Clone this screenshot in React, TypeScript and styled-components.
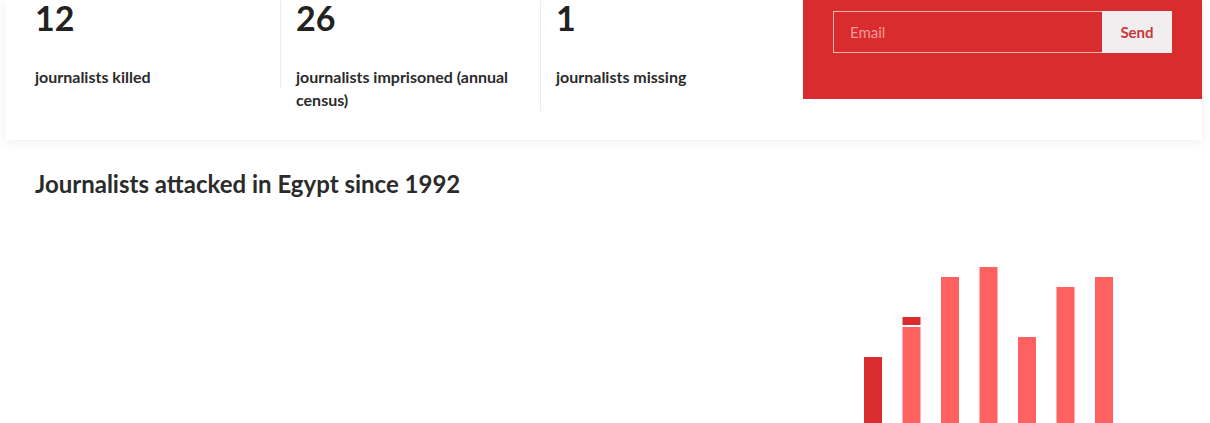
import React from 'react';
import {styled, createGlobalStyle} from 'styled-components';

const GlobalStyle = createGlobalStyle`
  html, body {
    margin: 0;
    padding: 0;
    background: #ffffff;
    overflow: hidden;
  }

  body {
    font-family: Lato, 'Open Sans', sans-serif;
    color: #2b2b2b;
  }

  * {
    box-sizing: border-box;
  }
`

type StatType = {
    value: number
    label: string
}

const stats: StatType[] = [
    {value: 12, label: 'journalists killed'},
    {value: 26, label: 'journalists imprisoned (annual census)'},
    {value: 1, label: 'journalists missing'},
]

type BarType = {
    killed: number
    other: number
}

// counts per year, the last ones only; earlier years are empty
const bars: BarType[] = [
    {killed: 8, other: 0},
    {killed: 1, other: 11},
    {killed: 0, other: 16},
    {killed: 0, other: 17},
    {killed: 0, other: 10},
    {killed: 0, other: 15},
    {killed: 0, other: 16},
]

const CHART_WIDTH = 1140
const CHART_HEIGHT = 210
const BASELINE = 206
const UNIT = 10
const BAR_WIDTH = 18
const FIRST_BAR_X = 829
const BAR_STEP = 38.5

const Chart = () => {
    return (
        <ChartSvg width={CHART_WIDTH} height={CHART_HEIGHT} viewBox={`0 0 ${CHART_WIDTH} ${CHART_HEIGHT}`}>
            {bars.map((bar, i) => {
                const x = FIRST_BAR_X + i * BAR_STEP
                const otherTop = BASELINE - bar.other * UNIT
                const killedTop = otherTop - bar.killed * UNIT
                return (
                    <g key={i}>
                        {bar.other > 0 &&
                            <rect x={x} y={otherTop} width={BAR_WIDTH} height={bar.other * UNIT} fill="#ff6161"/>}
                        {bar.killed > 0 &&
                            <rect x={x} y={killedTop} width={BAR_WIDTH}
                                  height={bar.killed * UNIT - (bar.other > 0 ? 2 : 0)} fill="#d92c2e"/>}
                    </g>
                )
            })}
        </ChartSvg>
    )
}

export default function App() {
    return (
        <Page>
            <GlobalStyle/>
            <StatsCard>
                <StatsRow>
                    {stats.map((stat, i) => (
                        <Stat key={stat.label} divider={i < stats.length - 1}>
                            <StatValue>{stat.value}</StatValue>
                            <StatLabel>{stat.label}</StatLabel>
                        </Stat>
                    ))}
                </StatsRow>
                <Subscribe>
                    <EmailForm onSubmit={(e) => e.preventDefault()}>
                        <EmailInput type="email" placeholder="Email"/>
                        <SendButton type="submit">Send</SendButton>
                    </EmailForm>
                </Subscribe>
            </StatsCard>
            <ChartSection>
                <ChartTitle>Journalists attacked in Egypt since 1992</ChartTitle>
                <Chart/>
            </ChartSection>
        </Page>
    )
}

const Page = styled.div`
  width: 1210px;
`

const StatsCard = styled.section`
  width: 1197px;
  margin-left: 5px;
  display: flex;
  align-items: flex-start;
  background: #ffffff;
  box-shadow: 0 2px 10px rgba(0, 0, 0, 0.07);
  padding-bottom: 29px;
`

const StatsRow = styled.div`
  display: flex;
  align-items: flex-start;
  padding-left: 16px;
  padding-top: 1px;
`

const Stat = styled.div<{ divider: boolean }>`
  width: 260px;
  padding: 0 16px 0 14px;
  border-right: 1px solid ${props => props.divider ? '#ececec' : 'transparent'};

  & + & {
    padding-left: 15px;
  }
`

const StatValue = styled.div`
  font-size: 34px;
  line-height: 34px;
  font-weight: 700;
  color: #222222;
`

const StatLabel = styled.p`
  margin: 30px 0 0;
  font-size: 16px;
  line-height: 23px;
  font-weight: 700;
  color: #2b2b2b;
`

const Subscribe = styled.div`
  width: 399px;
  height: 99px;
  margin-left: auto;
  background: #d92c2e;
  padding: 11px 30px 0;
`

const EmailForm = styled.form`
  display: flex;
  height: 42px;
`

const EmailInput = styled.input`
  flex: 1;
  height: 42px;
  border: 1px solid #f2b3b3;
  border-right: none;
  background: transparent;
  padding: 0 16px;
  font-family: Lato, sans-serif;
  font-size: 15px;
  color: #ffffff;
  outline: none;

  &::placeholder {
    color: #f79a98;
  }
`

const SendButton = styled.button`
  width: 70px;
  height: 42px;
  border: none;
  background: #f0eeee;
  color: #c9363b;
  font-family: Lato, sans-serif;
  font-size: 15px;
  font-weight: 700;
  cursor: pointer;
`

const ChartSection = styled.section`
  padding: 30px 35px 0;
`

const ChartTitle = styled.h2`
  margin: 0;
  font-size: 24px;
  line-height: 28px;
  font-weight: 700;
  color: #2b2b2b;
`

const ChartSvg = styled.svg`
  display: block;
  margin-top: 33px;
`
